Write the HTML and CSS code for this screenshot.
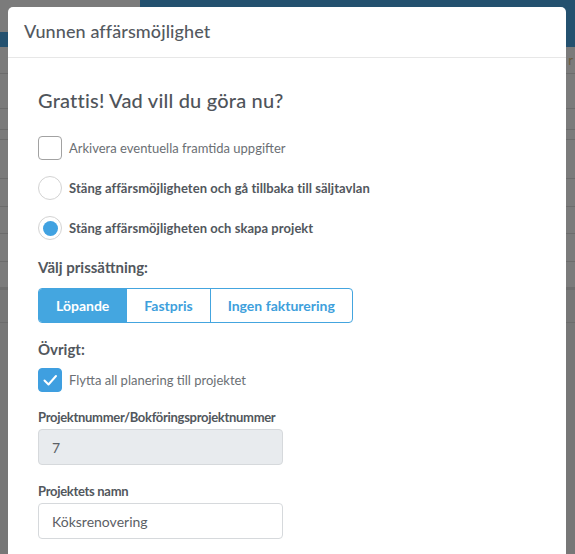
FILE: index.html
```html
<!DOCTYPE html>
<html lang="sv">
<head>
<meta charset="utf-8">
<title>Vunnen affärsmöjlighet</title>
<link rel="stylesheet" href="styles.css">
</head>
<body>
<div class="app">
  <div class="app-top">
    <div class="app-brand"></div>
    <div class="app-bar"></div>
  </div>
  <div class="app-nav"></div>
  <div class="app-head"><span class="app-head-text">r</span></div>
  <div class="app-row r1"></div>
  <div class="app-row r2"></div>
  <div class="app-row r3"></div>
  <div class="app-row r4"></div>
  <div class="app-row r5"></div>
  <div class="app-row r6"></div>
  <div class="app-row r7"></div>
  <div class="app-row r8"></div>
  <div class="app-row r9"></div>
  <div class="app-rest"></div>
</div>

<div class="modal">
  <div class="modal-header">
    <h1 class="modal-title">Vunnen affärsmöjlighet</h1>
  </div>
  <div class="modal-body">
    <h2 class="question">Grattis! Vad vill du göra nu?</h2>

    <div class="options">
      <label class="option">
        <span class="checkbox"></span>
        <span class="option-text light">Arkivera eventuella framtida uppgifter</span>
      </label>
      <label class="option">
        <span class="radio"></span>
        <span class="option-text">Stäng affärsmöjligheten och gå tillbaka till säljtavlan</span>
      </label>
      <label class="option">
        <span class="radio selected"><span class="radio-dot"></span></span>
        <span class="option-text">Stäng affärsmöjligheten och skapa projekt</span>
      </label>
    </div>

    <div class="section-title pricing-title">Välj prissättning:</div>
    <div class="btn-group">
      <span class="btn active">Löpande</span>
      <span class="btn">Fastpris</span>
      <span class="btn">Ingen fakturering</span>
    </div>

    <div class="section-title other-title">Övrigt:</div>
    <label class="option">
      <span class="checkbox checked">
        <svg viewBox="0 0 24 24" width="24" height="24"><path d="M6.5 12.5 L10.5 16.5 L18 8" fill="none" stroke="#fff" stroke-width="2" stroke-linecap="round" stroke-linejoin="round"/></svg>
      </span>
      <span class="option-text light">Flytta all planering till projektet</span>
    </label>

    <div class="field first-field">
      <div class="field-label">Projektnummer/Bokföringsprojektnummer</div>
      <div class="input disabled">7</div>
    </div>
    <div class="field">
      <div class="field-label">Projektets namn</div>
      <div class="input">Köksrenovering</div>
    </div>
  </div>
</div>
</body>
</html>
```
FILE: styles.css
```css
html, body {
  margin: 0;
  padding: 0;
  height: 554px;
  overflow: hidden;
}

body {
  background: #7a7a7a;
  font-family: Lato, "Liberation Sans", sans-serif;
  position: relative;
}

/* ---------- dimmed background app ---------- */
.app-top {
  display: flex;
  height: 32px;
}
.app-brand {
  width: 140px;
  background: #7b7b7b;
}
.app-bar {
  flex: 1;
  background: #24516f;
}
.app-nav {
  height: 15px;
  background: #24516f;
}
.app-head {
  height: 26px;
  border-bottom: 1px solid #6c6c6c;
  background: #7b7b7b;
  display: flex;
  justify-content: flex-end;
  align-items: center;
}
.app-head-text {
  color: #6a5a3c;
  font-size: 13px;
  padding-right: 2px;
}
.app-row {
  border-bottom: 1px solid #6c6c6c;
  background: #7b7b7b;
}
.r1 { height: 34px; }
.r2 { height: 20px; }
.r3 { height: 9px; }
.r4 { height: 38px; }
.r5 { height: 27px; }
.r6 { height: 26px; }
.r7 { height: 27px; }
.r8 { height: 25px; border-bottom: 3px solid #6e6e6e; }
.r9 { height: 32px; background: #777; }
.app-rest { height: 300px; background: #777; }

/* ---------- modal ---------- */
.modal {
  position: absolute;
  left: 8px;
  top: 7px;
  width: 558px;
  height: 600px;
  background: #fff;
  border-radius: 5px;
  color: #4f545a;
}

.modal-header {
  height: 50px;
  border-bottom: 1px solid #e7e7e7;
  display: flex;
  align-items: center;
  padding: 0 16px;
}
.modal-title {
  margin: -3px 0 0;
  font-size: 18px;
  font-weight: 500;
  color: #54595f;
  letter-spacing: 0.1px;
}

.modal-body {
  padding: 0 30px;
}

.question {
  margin: 30px 0 0;
  font-size: 20px;
  line-height: 24px;
  font-weight: 500;
  color: #4f545a;
  letter-spacing: 0.2px;
}

.options {
  margin-top: 24px;
  display: flex;
  flex-direction: column;
  gap: 16px;
}

.option {
  display: flex;
  align-items: center;
  gap: 7px;
  height: 24px;
}

.option-text {
  font-size: 13px;
  font-weight: 700;
  color: #52575d;
  letter-spacing: 0.05px;
}
.option-text.light {
  font-weight: 400;
  color: #6b6f74;
  letter-spacing: 0;
}

.checkbox {
  box-sizing: border-box;
  width: 24px;
  height: 24px;
  border: 1px solid #a2a2a2;
  border-radius: 4px;
  flex-shrink: 0;
  display: flex;
}
.checkbox.checked {
  background: #3f9fe0;
  border-color: #3f9fe0;
}
.checkbox svg {
  margin: -1px;
}

.radio {
  box-sizing: border-box;
  width: 24px;
  height: 24px;
  border: 1px solid #d3d3d3;
  border-radius: 50%;
  flex-shrink: 0;
  display: flex;
  align-items: center;
  justify-content: center;
}
.radio-dot {
  width: 15px;
  height: 15px;
  border-radius: 50%;
  background: #41a2e1;
}

.section-title {
  font-size: 15px;
  line-height: 20px;
  font-weight: 700;
  color: #52575d;
}
.pricing-title { margin-top: 17px; }
.other-title { margin-top: 16px; margin-bottom: 9px; }

.btn-group {
  margin-top: 11px;
  display: inline-flex;
  border: 1px solid #44a5df;
  border-radius: 4px;
  overflow: hidden;
  height: 35px;
  box-sizing: border-box;
}
.btn {
  display: flex;
  align-items: center;
  padding: 0 17px;
  font-size: 14px;
  font-weight: 700;
  color: #3e9fdc;
  border-left: 1px solid #44a5df;
}
.btn:first-child { border-left: 0; }
.btn.active {
  background: #44a6e0;
  color: #fff;
}

.field {
  margin-top: 18px;
  width: 245px;
}
.first-field { margin-top: 17px; }

.field-label {
  font-size: 13px;
  line-height: 16px;
  font-weight: 700;
  color: #52575d;
  letter-spacing: -0.3px;
  margin-bottom: 4px;
  white-space: nowrap;
}

.input {
  box-sizing: border-box;
  height: 36px;
  border: 1px solid #d6d9dc;
  border-radius: 4px;
  padding: 0 13px;
  display: flex;
  align-items: center;
  font-size: 14px;
  color: #5b6065;
  background: #fff;
}
.input.disabled {
  background: #e8ebee;
}
```
